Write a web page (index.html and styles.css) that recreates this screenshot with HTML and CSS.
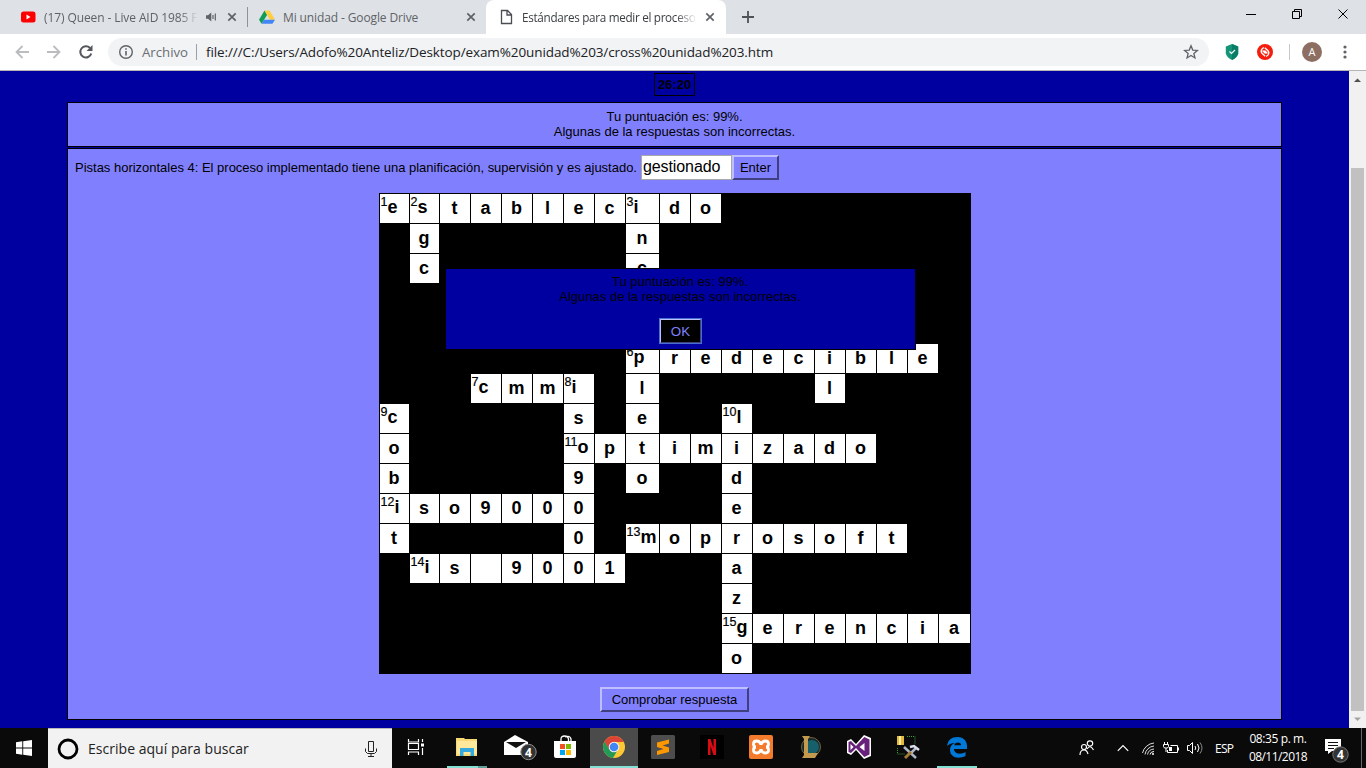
FILE: index.html
```html
<!DOCTYPE html>
<html lang="es">
<head>
<meta charset="utf-8">
<title>Estándares para medir el proceso</title>
<link rel="stylesheet" href="styles.css">
</head>
<body>
<header class="tabs">
  <div class="tab tab-youtube">
    <svg class="favicon" width="16" height="16" viewBox="0 0 16 16"><rect x="1" y="2.5" width="14.500" height="11" rx="2.500" fill="#f00"/><path d="M6.500 5.500v5l4-2.500z" fill="#fff"/></svg>
    <span class="tab-title fade title-youtube">(17) Queen - Live AID 1985 Fu</span>
    <svg class="audio" width="12" height="12" viewBox="0 0 12 12"><path d="M1 4.300h2L6.300 1.500v9L3 7.700H1z" fill="#5f6368"/><path d="M8 4v4M10.300 2.500v7" stroke="#5f6368" stroke-width="1.200"/></svg>
    <svg class="close" width="12" height="12" viewBox="0 0 12 12"><path d="M2.300 2.300l7.400 7.400M9.700 2.300L2.300 9.700" stroke="#5f6368" stroke-width="1.700"/></svg>
  </div>
  <div class="tab-divider"></div>
  <div class="tab tab-drive">
    <svg class="favicon" width="16" height="16" viewBox="0 0 16 16"><path d="M5.500 1.500L0 10.800l2.600 4L8.200 5.700z" fill="#0f9d58"/><path d="M5.500 1.500h5l5.500 9.300h-5.200z" fill="#ffcd40"/><path d="M5.100 10.800H16l-2.600 4H2.600z" fill="#4285f4"/></svg>
    <span class="tab-title title-drive">Mi unidad - Google Drive</span>
    <svg class="close" width="12" height="12" viewBox="0 0 12 12"><path d="M2.300 2.300l7.400 7.400M9.700 2.300L2.300 9.700" stroke="#5f6368" stroke-width="1.700"/></svg>
  </div>
  <div class="tab tab-active">
    <svg class="favicon" width="16" height="16" viewBox="0 0 16 16"><path d="M3.500 1.500h6l4 4v9h-10zM9 1.500V6h4.500" fill="none" stroke="#4a4d51" stroke-width="1.300"/></svg>
    <span class="tab-title fade title-active">Estándares para medir el proceso</span>
    <svg class="close" width="12" height="12" viewBox="0 0 12 12"><path d="M2.300 2.300l7.400 7.400M9.700 2.300L2.300 9.700" stroke="#5f6368" stroke-width="1.700"/></svg>
  </div>
  <svg class="new-tab" width="14" height="14" viewBox="0 0 14 14"><path d="M7 1v12M1 7h12" stroke="#4f5257" stroke-width="1.800"/></svg>
  <svg class="window-buttons" width="116" height="14" viewBox="0 0 116 14" fill="none" stroke="#000"><path d="M0 7.500h10M48.500 4.500v-2h7v7h-2M46.500 4.500h7v7h-7zM92.500 2.500l9 9M101.500 2.500l-9 9"/></svg>
</header>

<nav class="toolbar">
  <svg class="nav-arrows" width="48" height="16" viewBox="0 0 48 16" fill="none" stroke="#babcbe" stroke-width="1.800"><path d="M14 8H1.500M7.500 2L1.500 8l6 6M32 8h12.500M38.500 2l6 6-6 6"/></svg>
  <svg class="reload" width="16" height="16" viewBox="0 0 16 16"><path d="M13.300 9.500A5.600 5.600 0 1 1 12 4" fill="none" stroke="#54575b" stroke-width="2"/><path d="M14.500 1v6h-6z" fill="#54575b"/></svg>
  <div class="address">
    <svg width="16" height="16" viewBox="0 0 16 16"><circle cx="8" cy="8" r="6.300" fill="none" stroke="#5f6368" stroke-width="1.400"/><path d="M8 7v4.500M8 4.300v1.500" stroke="#5f6368" stroke-width="1.600"/></svg>
    <span class="scheme">Archivo</span><i class="address-line"></i>
    <span class="url">file:///C:/Users/Adofo%20Anteliz/Desktop/exam%20unidad%203/cross%20unidad%203.htm</span>
    <svg class="star" width="16" height="16" viewBox="0 0 16 16"><path d="M8 1.800l1.750 4.300 4.650.35-3.550 3 1.100 4.500L8 11.500l-3.950 2.450 1.100-4.500-3.550-3 4.650-.35z" fill="none" stroke="#5f6368" stroke-width="1.300"/></svg>
  </div>
  <svg class="shield" width="14" height="16" viewBox="0 0 14 16"><path d="M7 0l6.200 2.500v7Q12 13.500 7 16Q2 13.500 .8 9.500v-7z" fill="#159477"/><path d="M7 0l6.200 2.500v7Q12 13.500 7 16z" fill="#087e66"/><path d="M4.500 7.500l2 2 3.500-3.500" fill="none" stroke="#fff" stroke-width="1.100"/></svg>
  <svg class="sync" width="16" height="16" viewBox="0 0 16 16"><circle cx="8" cy="8" r="8" fill="#f51c0c"/><path d="M6.800 3.500Q2.800 6 4.800 9l3.400 3.200M5.600 6.500l3 3M9.200 12.500Q13.200 10 11.200 7L7.800 3.800M10.400 9.500l-3-3" fill="none" stroke="#fff" stroke-width="1.400"/></svg>
  <i class="toolbar-line"></i>
  <span class="avatar">A</span>
  <svg class="dots" width="4" height="14" viewBox="0 0 4 14" fill="#5f6368"><circle cx="2" cy="2" r="1.600"/><circle cx="2" cy="7" r="1.600"/><circle cx="2" cy="12" r="1.600"/></svg>
</nav>

<div class="viewport">
  <main class="page">
    <div class="timer">26:20</div>
    <section class="feedback">Tu puntuación es: 99%.<br>Algunas de la respuestas son incorrectas.</section>
    <section class="exercise">
      <div class="clue"><span class="clue-text">Pistas horizontales 4: El proceso implementado tiene una planificación, supervisión y es ajustado.</span><span class="answer">gestionado</span><button class="btn enter">Enter</button></div>
      <div class="board">
        <div class="grid" id="grid"></div>
        <div class="dialog">
          <p class="dialog-text">Tu puntuación es: 99%.<br>Algunas de la respuestas son incorrectas.</p>
          <button class="ok">OK</button>
        </div>
      </div>
      <button class="btn check">Comprobar respuesta</button>
    </section>
  </main>
  <aside class="scrollbar">
    <svg width="17" height="17" viewBox="0 0 17 17"><path d="M5 11h7L8.500 7.500z" fill="#505050"/></svg>
    <div class="scroll-thumb"></div>
    <svg width="17" height="17" viewBox="0 0 17 17"><path d="M5 6.500h7L8.500 10z" fill="#a3a3a3"/></svg>
  </aside>
</div>

<footer class="taskbar">
  <div class="start"><svg width="16" height="16" viewBox="0 0 16 16" fill="#fff"><path d="M0 2.200l6.300-.9v6.200H0zM7.200 1.200L16 0v7.500H7.200zM0 8.400h6.300v6.300L0 13.800zM7.200 8.400H16V16l-8.800-1.200z"/></svg></div>
  <div class="search">
    <svg width="22" height="22" viewBox="0 0 22 22"><circle cx="11" cy="11" r="9" fill="none" stroke="#000" stroke-width="2.800"/></svg>
    <span class="search-text">Escribe aquí para buscar</span>
    <svg class="mic" width="12" height="18" viewBox="0 0 12 18" fill="none" stroke="#222"><path d="M3.500 1.500h5v10h-5zM.500 8.500v3l2 2h7l2-2v-3M6 13.500v3M3 16.500h6"/></svg>
  </div>
  <div class="apps">
    <div class="app task-view"><svg width="24" height="24" viewBox="0 0 24 24" fill="none" stroke="#fff" stroke-width="1.200"><path d="M4.500 4v3h10V4M4.500 20v-3h10v3M4.500 8.500h10v6h-10zM18.500 4v3M18.500 13v7"/><path d="M17 8.500h3v3h-3z" fill="#fff" stroke="none"/></svg></div>
    <div class="app running grouped"><svg width="24" height="24" viewBox="0 0 24 24"><path d="M1 3h8l1 1h12v17H1z" fill="#f8d775"/><path d="M2 6h20v13H2z" fill="#ffe79b"/><path d="M5 21v-8h14v8h-3.500v-4h-7v4z" fill="#35a9df"/></svg></div>
    <div class="app mail"><svg width="34" height="28" viewBox="0 0 34 28"><path d="M1 9l11-7 13 7v13H1z" fill="#fff"/><path d="M3 9h20l-10 6z" fill="#111"/><circle cx="25.500" cy="19" r="7.700" fill="#333" stroke="#8c8c8c"/><text x="22" y="23.500" class="badge-text">4</text></svg></div>
    <div class="app"><svg width="24" height="26" viewBox="0 0 24 26"><path d="M8 9V5q0-3 3.500-3t4 3v4M12 3q5-2 6 2v3" fill="none" stroke="#fff" stroke-width="1.300"/><path d="M1 7h22v15q0 2-2 2H3q-2 0-2-2z" fill="#fff"/><path d="M7 10h5v5H7z" fill="#f25022"/><path d="M13 10h5v5h-5z" fill="#7fba00"/><path d="M7 16h5v5H7z" fill="#00a4ef"/><path d="M13 16h5v5h-5z" fill="#ffb900"/></svg></div>
    <div class="app current"><svg width="24" height="24" viewBox="0 0 24 24"><circle cx="12" cy="12" r="11" fill="#fcc934"/><path d="M2.500 6.500A11 11 0 0 1 21.500 6.500H12z" fill="#db4437"/><path d="M2.500 6.500A11 11 0 0 0 11 23l5-8.500-9-1z" fill="#259a57"/><path d="M2.500 6.500L7.300 14.700 12 7h9.700L17 3H6z" fill="#db4437"/><path d="M2.500 6.500L7.300 14.700 9 18 3 16z" fill="#259a57"/><circle cx="12" cy="12" r="5.300" fill="#f1f1f1"/><circle cx="12" cy="12" r="4.300" fill="#4285f4"/></svg></div>
    <div class="app"><svg width="24" height="24" viewBox="0 0 24 24"><rect width="24" height="24" rx="1.500" fill="#4d4d4d"/><path d="M18 4.500v4l-6.500 2 6.500 2v4.500L6 20v-4l6.500-2L6 12V7.500z" fill="#ff9800"/></svg></div>
    <div class="app"><svg width="24" height="24" viewBox="0 0 24 24"><path d="M0 0h24v24H0z" fill="#000"/><path d="M8 4h2.500l3 9V4H16v16h-2.500l-3-9v9H8z" fill="#d90c16"/></svg></div>
    <div class="app"><svg width="24" height="24" viewBox="0 0 24 24"><rect width="24" height="24" rx="2" fill="#f47b2b"/><path d="M7.500 6q-3 0-3 3t2.500 3q-2.500 0-2.500 3t3 3 4-2.500h1q1 2.500 4 2.500t3-3-2.500-3q2.500 0 2.500-3t-3-3-4 2.500h-1Q10.500 6 7.500 6z" fill="none" stroke="#fff" stroke-width="2.800"/></svg></div>
    <div class="app"><svg width="24" height="24" viewBox="0 0 24 24"><circle cx="13" cy="12" r="9.500" fill="#13282e" stroke="#776237"/><circle cx="14" cy="12" r="7" fill="#16606b"/><path d="M4 1h8l-2 3v14h10l-3 5H4l2-3V4z" fill="#c49a4e"/></svg></div>
    <div class="app"><svg width="26" height="24" viewBox="0 0 26 24"><path d="M1 6l4-2 5 5 8-9 7 3v18l-7 3-8-9-5 5-4-2z" fill="#fff"/><path d="M2.500 7L5 6l5 5 8.300-9L23.500 4.500v15L18.300 22 10 13l-5 5-2.500-1z" fill="#68217a"/><path d="M4.500 9v6l3-3zM18.500 8v8l-5-4z" fill="#fff"/></svg></div>
    <div class="app"><svg width="24" height="24" viewBox="0 0 24 24"><path d="M1 1h7v9H1z" fill="#e6b93b"/><path d="M3 1h2v9H3z" fill="#fff0a8"/><path d="M11 1.500h8v8M1.500 13v6h8" fill="none" stroke="#3d9c35" stroke-dasharray="1 1"/><path d="M8 12l12 11" stroke="#aeb6c4" stroke-width="2.500"/><path d="M20 13l-5 5" stroke="#aeb6c4" stroke-width="2.500"/><path d="M15 17l-6 6" stroke="#a27b36" stroke-width="3"/><path d="M14 12l4-1 5 4" fill="none" stroke="#d9dfe8" stroke-width="2.500"/></svg></div>
    <div class="app running"><svg width="22" height="22" viewBox="0 0 22 22"><path d="M1 10C2 4 5.500 1 11.500 1 18 1 21 5.500 21 10v3H8c0 5 7 6 11.500 3v4C11 24 4 20.500 4 14c0-3.500 2-6 5-7C5 7 2.500 8.500 1 10zM8.200 9.300h7C15 5.500 9 5.500 8.200 9.300z" fill="#0078d7" fill-rule="evenodd"/></svg></div>
  </div>
  <div class="tray">
    <svg class="people" width="16" height="16" viewBox="0 0 16 16" fill="none" stroke="#fff" stroke-width="1.200"><circle cx="5" cy="7" r="2.500"/><path d="M1 15q0-5 4-5 3 0 4 4"/><circle cx="11" cy="3.500" r="2.700"/><path d="M8 9q3-5 6.500 1"/></svg>
    <svg class="chevron" width="12" height="8" viewBox="0 0 12 8"><path d="M.8 6.800L6 1.500l5.200 5.300" fill="none" stroke="#fff" stroke-width="1.200"/></svg>
    <svg class="wifi" width="13" height="13" viewBox="0 0 13 13" fill="none" stroke="#fff"><path d="M.500 11A13 13 0 0 1 12 1M3 12.500A10 10 0 0 1 12 4M5.500 12.500A7 7 0 0 1 12 7" opacity=".85"/><path d="M8 12.500A4 4 0 0 1 12 9.500"/><circle cx="11" cy="12" r="1" fill="#fff" stroke="none"/></svg>
    <svg class="battery" width="17" height="14" viewBox="0 0 17 14" fill="none" stroke="#fff"><path d="M7.500 4.500h7v7h-10V9M15.500 6.500v3M1.500 1v3M4.500 1v3M.500 3.500h5v2l-1 1.500h-3l-1-1.500zM3 7v4"/><path d="M6 6h3v4H6z" fill="#fff" stroke="none"/></svg>
    <svg class="volume" width="17" height="14" viewBox="0 0 17 14" fill="none" stroke="#fff"><path d="M.500 4.500h2l3-3v11l-3-3h-2zM8 5q1.500 2 0 4M10.500 3q3 4 0 8"/><path d="M13 1.500q4 5.500 0 11" stroke="#888"/></svg>
    <span class="lang">ESP</span>
    <div class="clock"><span class="time">08:35 p. m.</span><span class="date">08/11/2018</span></div>
    <svg class="notify" width="26" height="26" viewBox="0 0 26 26"><path d="M1 1h16v12H8l-4 3v-3H1z" fill="#fff"/><path d="M4 4.500h10M4 7.500h10M4 10.500h6" stroke="#111"/><circle cx="16.500" cy="16.500" r="7.700" fill="#333" stroke="#777"/><text x="13" y="21" class="badge-text">4</text></svg>
    <i class="desktop-line"></i>
  </div>
</footer>
<script src="crossword.js"></script>
</body>
</html>
```
FILE: styles.css
```css
* { box-sizing: border-box; }
body { margin: 0; width: 1366px; height: 768px; overflow: hidden; display: flex; flex-direction: column; font-family: "Liberation Sans", Arial, sans-serif; }
svg { display: block; flex: none; }

.tabs, .toolbar, .taskbar { font-family: "Open Sans", "Noto Sans", sans-serif; white-space: nowrap; }
.tabs { height: 34px; flex: none; background: #dee1e6; display: flex; align-items: center; color: #5f6368; font-size: 12px; }
.tab { display: flex; align-items: center; height: 34px; }
.tab-youtube { width: 247px; padding-left: 20px; }
.tab-divider { width: 1px; height: 20px; background: #8f9296; }
.tab-drive { width: 238px; padding-left: 11px; }
.tab-active { width: 240px; padding-left: 12px; background: #fff; border-radius: 8px 8px 0 0; color: #3c4043; }
.tab-title { margin-left: 8px; overflow: hidden; flex: none; }
.title-youtube { width: 154px; letter-spacing: -.1px; }
.title-drive { width: 182px; letter-spacing: -.12px; }
.title-active { width: 175px; letter-spacing: -.3px; font-size: 11.700px; }
.fade { -webkit-mask-image: linear-gradient(90deg, #000 88%, transparent); mask-image: linear-gradient(90deg, #000 88%, transparent); }
.audio { margin-left: 7px; }
.title-youtube ~ .close { margin-left: 9px; }
.title-drive ~ .close { margin-left: 0; }
.title-active ~ .close { margin-left: 7px; }
.new-tab { margin-left: 15px; }
.window-buttons { margin: -6px 4px 0 auto; }

.toolbar { height: 37px; flex: none; background: #fff; border-bottom: 1px solid #b6b4b6; display: flex; align-items: center; }
.nav-arrows { margin-left: 15px; }
.reload { margin-left: 15px; }
.address { margin-left: 14px; width: 1101px; height: 28px; border-radius: 14px; background: #f1f3f4; display: flex; align-items: center; padding: 0 10px; font-size: 14px; }
.scheme { margin-left: 8px; color: #6b6e73; width: 47px; font-size: 13.200px; }
.address-line { width: 1px; height: 16px; background: #9aa0a6; margin: 0 9px 0 7px; }
.url { color: #202124; letter-spacing: -.1px; font-size: 13.500px; }
.star { margin-left: auto; }
.shield { margin-left: 16px; }
.sync { margin-left: 18px; }
.toolbar-line { width: 1px; height: 16px; background: #c6c8ca; margin-left: 16px; }
.avatar { width: 20px; height: 20px; border-radius: 50%; background: #8d6e63; color: #fff; font-size: 11px; line-height: 20px; text-align: center; margin-left: 12px; }
.dots { margin-left: 21px; }

.viewport { height: 657px; flex: none; display: flex; background: #0000a0; }
.page { width: 1349px; display: flex; flex-direction: column; align-items: center; color: #000; font-size: 13px; line-height: 15px; }
.timer { margin-top: 2px; width: 41px; height: 23px; border: 1px solid #000; text-align: center; font-weight: bold; line-height: 21px; }
.feedback { margin-top: 6px; width: 1215px; height: 45px; background: #8080ff; border: 1px solid #000; text-align: center; padding-top: 6px; }
.exercise { margin-top: 1px; width: 1215px; height: 572px; background: #8080ff; border: 1px solid #000; display: flex; flex-direction: column; align-items: center; }
.clue { width: 100%; height: 44px; padding: 6px 0 0 7px; display: flex; }
.clue-text { width: 566px; line-height: 25px; white-space: nowrap; letter-spacing: -.01px; }
.answer { width: 91px; height: 25px; background: #fff; border: 1px solid #a9a9a9; padding-left: 1px; font-size: 16px; line-height: 22px; letter-spacing: -.1px; }
.btn { background: #8080ff; border: 2px solid; border-color: #bfbfff #404080 #404080 #bfbfff; padding: 0; color: #000; font: 13px "Liberation Sans", Arial, sans-serif; }
.enter { width: 47px; height: 25px; }
.check { width: 149px; height: 25px; margin-top: 13px; }
.board { position: relative; }
.grid { background: #000; width: 592px; height: 481px; padding: 0 1px 1px 0; display: grid; grid-template-columns: 30px 30px repeat(6, 31px) 34px repeat(9, 31px) 32px; grid-template-rows: repeat(16, 30px); }
.cell { background: #fff; margin: 1px 0 0 1px; font-size: 18px; font-weight: bold; line-height: 28px; text-align: center; overflow: hidden; }
.blank { background: #000; }
.numbered { display: flex; justify-content: flex-start; padding-left: 1px; line-height: 26px; }
.number { font-size: 12.500px; font-weight: normal; line-height: 16px; -webkit-text-stroke: .2px #000; }
.dialog { position: absolute; left: 66px; top: 75px; width: 471px; height: 82px; background: #0000a0; border: 1px solid #000; display: flex; flex-direction: column; align-items: center; }
.dialog-text { margin: 5px 0 14px; text-align: center; }
.ok { width: 43px; height: 26px; margin-left: 1px; background: #000; color: #8080ff; border: 2px solid; border-color: #bfbfff #404080 #404080 #bfbfff; outline: 1px solid #4870cc; outline-offset: -1px; padding: 0; font: 13.333px "Liberation Sans", Arial, sans-serif; }
.scrollbar { width: 17px; background: #f1f1f1; display: flex; flex-direction: column; }
.scroll-thumb { width: 13px; height: 543px; margin: 80px 0 0 2px; background: #c1c1c1; }

.taskbar { height: 40px; flex: none; background: #0a0a0a; display: flex; color: #fff; }
.start { width: 48px; display: flex; align-items: center; justify-content: center; }
.search { width: 344px; background: #f2f2f2; border-top: 1px solid #b8b8b8; display: flex; align-items: center; padding: 0 15px 0 9px; color: #222; font-size: 14px; }
.search-text { margin-left: 9px; letter-spacing: .03px; }
.mic { margin-left: auto; }
.apps { display: flex; margin-left: 1px; }
.app { width: 49px; height: 40px; display: flex; align-items: center; justify-content: center; padding-bottom: 2px; }
.task-view { padding-right: 3px; }
.mail { padding-left: 8px; }
.running { background: linear-gradient(#84e0d4, #84e0d4) 5px 100% / 40px 2px no-repeat; }
.grouped { background: linear-gradient(90deg, #84e0d4 31px, #5f9f98 31px) 5px 100% / 40px 2px no-repeat; }
.current { width: 48px; margin-left: 1px; background: linear-gradient(#84e0d4, #84e0d4) 0 100% / 48px 2px no-repeat #4b4b4b; }
.badge-text { fill: #fff; font: bold 12px "Open Sans", sans-serif; }
.tray { margin-left: auto; display: flex; align-items: center; width: 287px; font-size: 12px; }
.chevron { margin-left: 22px; }
.wifi { margin-left: 13px; }
.battery { margin-left: 8px; }
.volume { margin-left: 7px; }
.lang { margin-left: 11px; width: 20px; letter-spacing: -.7px; }
.clock { margin-left: 13px; width: 60px; display: flex; flex-direction: column; align-items: center; line-height: 18px; letter-spacing: -.4px; }
.date { letter-spacing: -.55px; }
.notify { margin-left: 16px; margin-top: 6px; }
.desktop-line { width: 1px; height: 40px; background: #666; margin-left: 11px; }
```
FILE: crossword.js
```js
// One string per row: "." is a closed square, "_" an open square without a letter.
const rows = [
  "establecido........",
  ".g......n..........",
  ".c......c..........",
  "........o..........",
  "........m..........",
  "........predecible.",
  "...cmmi.l.....l....",
  "c.....s.e..l.......",
  "o.....optimizado...",
  "b.....9.o..d.......",
  "iso9000....e.......",
  "t.....0.moprosoft..",
  ".is_9001...a.......",
  "...........z.......",
  "...........gerencia",
  "...........o......."
];
const numbers = {
  "0,0": 1, "0,1": 2, "0,8": 3, "5,8": 6, "6,3": 7, "6,6": 8, "7,0": 9,
  "7,11": 10, "8,6": 11, "10,0": 12, "11,8": 13, "12,1": 14, "14,11": 15
};
const grid = document.getElementById("grid");
rows.forEach((row, r) => [...row].forEach((letter, c) => {
  const cell = document.createElement("div");
  cell.className = "cell";
  if (letter === ".") {
    cell.classList.add("blank");
  } else {
    const number = numbers[r + "," + c];
    if (number) {
      cell.classList.add("numbered");
      const label = document.createElement("span");
      label.className = "number";
      label.textContent = number;
      cell.append(label);
    }
    const text = document.createElement("span");
    text.textContent = letter === "_" ? "" : letter;
    cell.append(text);
  }
  grid.append(cell);
}));
```
